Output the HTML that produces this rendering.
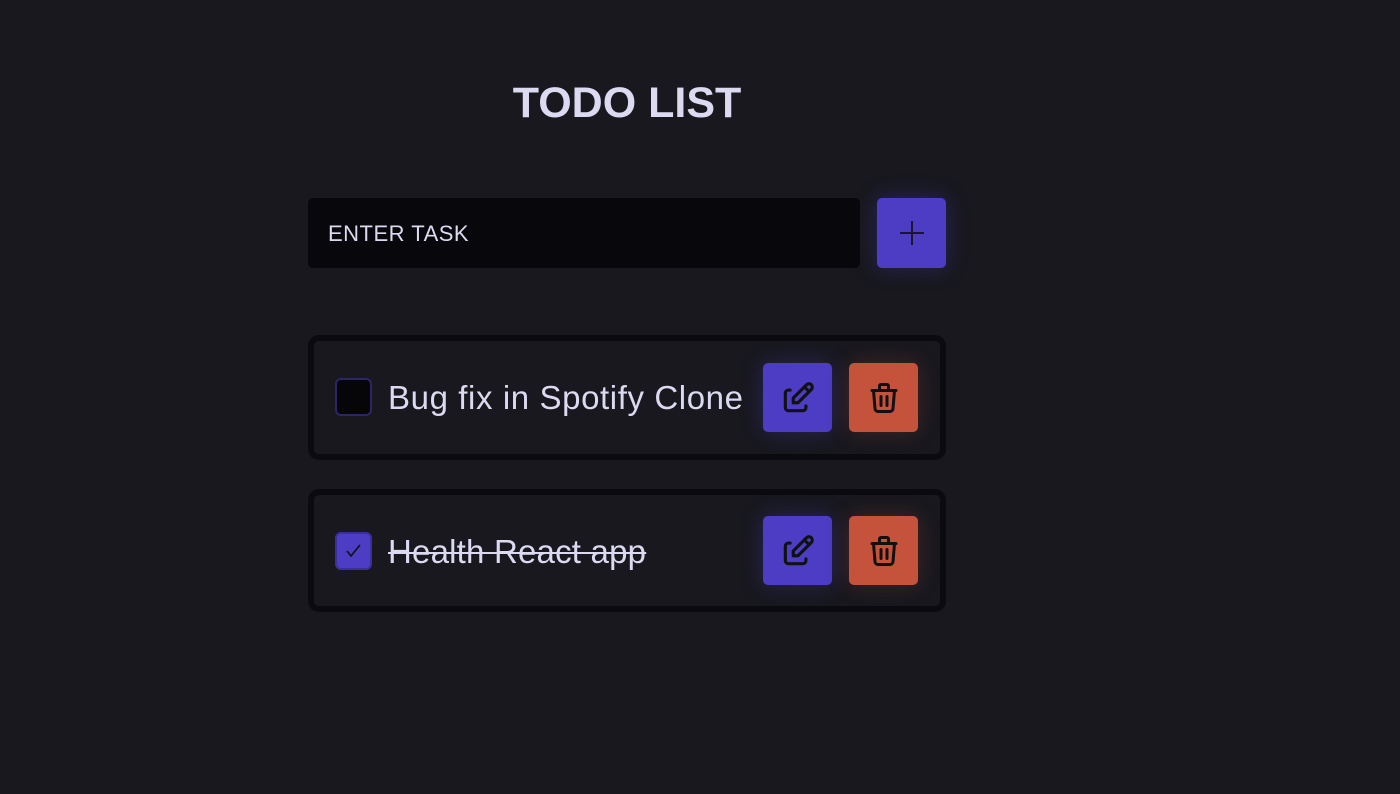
<!DOCTYPE html>
<html><head><meta charset="utf-8"><style>
*{box-sizing:border-box;margin:0;padding:0}
body{width:1400px;height:794px;background:#18181e;font-family:"Liberation Sans",sans-serif;position:relative;overflow:hidden;color:#dcdaf0}
.title{position:absolute;left:0;width:1254px;top:79px;text-align:center;font-weight:bold;font-size:43px}
.input{position:absolute;left:308px;top:198px;width:552px;height:70px;background:#08080c;border-radius:5px;font-size:22px;padding-left:20px;line-height:72px;letter-spacing:0.5px}
.btn{position:absolute;width:69px;height:69px;border-radius:5px;display:flex;align-items:center;justify-content:center}
.p{background:#4c3dc4;box-shadow:0 0 22px rgba(76,61,196,0.35)}
.o{background:#c5523a;box-shadow:0 0 22px rgba(197,82,58,0.25)}
.card{position:absolute;left:308px;width:638px;border:6px solid #0b0b0f;border-radius:11px;background:#18181e}
.cb{position:absolute;left:335px;width:37px;height:38px;border-radius:6px;border:2px solid #2c2568;background:#060608}
.txt{position:absolute;left:388px;font-size:33px;white-space:nowrap}
</style></head><body>
<div class="title">TODO LIST</div>
<div class="input">ENTER TASK</div>
<div class="btn p" style="left:877px;top:198px;height:70px"><svg width="28" height="28" viewBox="0 0 28 28"><path d="M14 2v24M2 14h24" stroke="#1a1630" stroke-width="2"/></svg></div>

<div class="card" style="top:335px;height:125px"></div>
<div class="cb" style="top:378px"></div>
<div class="txt" style="top:379px;letter-spacing:0.6px">Bug fix in Spotify Clone</div>
<div class="btn p" style="left:763px;top:363px"><svg width="38" height="38" viewBox="0 0 24 24" fill="none" stroke="#111" stroke-width="2" stroke-linecap="round" stroke-linejoin="round"><path d="M7 7H6a2 2 0 0 0-2 2v9a2 2 0 0 0 2 2h9a2 2 0 0 0 2-2v-1"/><path d="M20.4 6.6a2.1 2.1 0 0 0-3-3L9 12v3h3z"/><path d="M16 5l3 3"/></svg></div>
<div class="btn o" style="left:849px;top:363px"><svg width="36" height="36" viewBox="0 0 24 24" fill="none" stroke="#111" stroke-width="2" stroke-linecap="round" stroke-linejoin="round"><path d="M4 7h16M10 11v6M14 11v6M5 7l1 12a2 2 0 0 0 2 2h8a2 2 0 0 0 2-2l1-12M9 7V4a1 1 0 0 1 1-1h4a1 1 0 0 1 1 1v3"/></svg></div>

<div class="card" style="top:489px;height:123px"></div>
<div class="cb" style="top:532px;background:#4c3dc4;border-color:#3a2f9c"><svg width="33" height="34" viewBox="0 0 33 34"><path d="M10 17l4 5 9-11" stroke="#111" stroke-width="1.6" fill="none"/></svg></div>
<div class="txt" style="top:533px;letter-spacing:0.2px;text-decoration:line-through;text-decoration-thickness:2px">Health React app</div>
<div class="btn p" style="left:763px;top:516px"><svg width="38" height="38" viewBox="0 0 24 24" fill="none" stroke="#111" stroke-width="2" stroke-linecap="round" stroke-linejoin="round"><path d="M7 7H6a2 2 0 0 0-2 2v9a2 2 0 0 0 2 2h9a2 2 0 0 0 2-2v-1"/><path d="M20.4 6.6a2.1 2.1 0 0 0-3-3L9 12v3h3z"/><path d="M16 5l3 3"/></svg></div>
<div class="btn o" style="left:849px;top:516px"><svg width="36" height="36" viewBox="0 0 24 24" fill="none" stroke="#111" stroke-width="2" stroke-linecap="round" stroke-linejoin="round"><path d="M4 7h16M10 11v6M14 11v6M5 7l1 12a2 2 0 0 0 2 2h8a2 2 0 0 0 2-2l1-12M9 7V4a1 1 0 0 1 1-1h4a1 1 0 0 1 1 1v3"/></svg></div>
</body></html>
